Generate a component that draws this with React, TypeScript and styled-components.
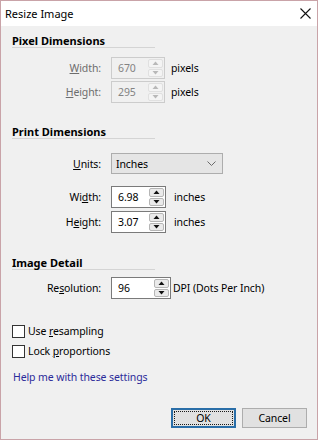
import React from "react";
import styled, { createGlobalStyle } from "styled-components";

const Global = createGlobalStyle`
  html, body { margin: 0; padding: 0; background: #f0f0f0; }
  body {
    font-family: "Noto Sans", "Open Sans", sans-serif;
    font-size: 10.5px;
    letter-spacing: -0.1px;
    color: #000;
  }
  #root { width: 318px; height: 440px; }
`;

const Window = styled.div`
  box-sizing: border-box;
  width: 318px;
  height: 440px;
  border: 1px solid #c9a3a8;
  background: #f0f0f0;
  display: flex;
  flex-direction: column;
`;

const TitleBar = styled.div`
  height: 25px;
  background: #fff;
  display: flex;
  align-items: center;
  justify-content: space-between;
  padding: 0 6px 0 4px;
  font-size: 11px;
  letter-spacing: 0;
`;

const Body = styled.div`
  flex: 1;
  display: flex;
  flex-direction: column;
  padding: 8px 10px 0 11px;
`;

const Heading = styled.div<{ $top: number }>`
  margin-top: ${(p) => p.$top}px;
  width: 143px;
  font-weight: 700;
  font-size: 11px;
  letter-spacing: 0;
  line-height: 13px;
  border-bottom: 1px solid #d4d4d4;
`;

const Row = styled.div<{ $top: number }>`
  display: grid;
  grid-template-columns: 89px auto 1fr;
  column-gap: 10px;
  align-items: center;
  margin-top: ${(p) => p.$top}px;
`;

const Label = styled.span<{ $dim?: boolean }>`
  text-align: right;
  color: ${(p) => (p.$dim ? "#6d6d6d" : "#000")};
`;

const Unit = styled.span<{ $gap: number }>`
  margin-left: ${(p) => p.$gap}px;
`;

const SpinBox = styled.div<{ $w: number; $disabled?: boolean }>`
  box-sizing: border-box;
  width: ${(p) => p.$w}px;
  height: 22px;
  display: flex;
  border: 1px solid ${(p) => (p.$disabled ? "#cccccc" : "#7a7a7a")};
  background: ${(p) => (p.$disabled ? "#f0f0f0" : "#fff")};
`;

const SpinText = styled.div<{ $disabled?: boolean }>`
  flex: 1;
  padding-left: 6px;
  display: flex;
  align-items: center;
  color: ${(p) => (p.$disabled ? "#838383" : "#000")};
`;

const SpinButtons = styled.div`
  width: 15px;
  display: flex;
  flex-direction: column;
  gap: 1px;
  padding: 1px 1px 1px 0;
`;

const SpinButton = styled.div<{ $disabled?: boolean }>`
  flex: 1;
  box-sizing: border-box;
  border: 1px solid ${(p) => (p.$disabled ? "#e0e0e0" : "#b5b5b5")};
  border-radius: 2px;
  background: ${(p) => (p.$disabled ? "#f4f4f4" : "#eaeaea")};
  display: flex;
  align-items: center;
  justify-content: center;
`;

const Combo = styled.div`
  box-sizing: border-box;
  width: 112px;
  height: 21px;
  border: 1px solid #adadad;
  background: #e5e5e5;
  display: flex;
  align-items: center;
  justify-content: space-between;
  padding: 0 6px 0 4px;
`;

const CheckRow = styled.label<{ $top: number }>`
  display: flex;
  align-items: center;
  gap: 3px;
  margin-top: ${(p) => p.$top}px;
  height: 14px;
`;

const Box = styled.span`
  box-sizing: border-box;
  width: 13px;
  height: 13px;
  border: 1px solid #333;
  background: #fff;
`;

const Link = styled.div`
  margin-top: 12px;
  line-height: 15px;
  color: #2b2b9a;
  margin-left: 1px;
`;

const Footer = styled.div`
  margin-top: auto;
  display: flex;
  justify-content: flex-end;
  gap: 6px;
  padding: 0 0 11px 0;
`;

const Button = styled.div<{ $default?: boolean }>`
  box-sizing: border-box;
  width: 65px;
  height: 20px;
  display: flex;
  align-items: center;
  justify-content: center;
  background: #e1e1e1;
  border: 1px solid ${(p) => (p.$default ? "#2a6ea8" : "#adadad")};
  box-shadow: ${(p) => (p.$default ? "inset 0 0 0 1px #2a6ea8" : "none")};
  position: relative;
`;

const Focus = styled.span`
  position: absolute;
  inset: 2px;
  border: 1px dotted #1a1a1a;
`;

const U = styled.span`
  text-decoration: underline;
`;

const Arrow = ({ up, color }: { up?: boolean; color: string }) => (
  <svg width="7" height="4" viewBox="0 0 7 4">
    <polygon points={up ? "0.5,4 3.5,0.5 6.5,4" : "0.5,0 3.5,3.5 6.5,0"} fill={color} />
  </svg>
);

const Spinner = ({ value, w, disabled }: { value: string; w: number; disabled?: boolean }) => (
  <SpinBox $w={w} $disabled={disabled}>
    <SpinText $disabled={disabled}>{value}</SpinText>
    <SpinButtons>
      <SpinButton $disabled={disabled}>
        <Arrow up color={disabled ? "#b8b8b8" : "#111"} />
      </SpinButton>
      <SpinButton $disabled={disabled}>
        <Arrow color={disabled ? "#b8b8b8" : "#111"} />
      </SpinButton>
    </SpinButtons>
  </SpinBox>
);

export default function App() {
  return (
    <>
      <Global />
      <Window>
        <TitleBar>
          <span>Resize Image</span>
          <svg width="11" height="11" viewBox="0 0 11 11">
            <path d="M0.5 0.5 L10.5 10.5 M10.5 0.5 L0.5 10.5" stroke="#111" strokeWidth="1.1" />
          </svg>
        </TitleBar>
        <Body>
          <Heading $top={0}>Pixel Dimensions</Heading>
          <Row $top={9}>
            <Label $dim><U>W</U>idth:</Label>
            <Spinner value="670" w={54} disabled />
            <Unit $gap={-4}>pixels</Unit>
          </Row>
          <Row $top={2}>
            <Label $dim><U>H</U>eight:</Label>
            <Spinner value="295" w={54} disabled />
            <Unit $gap={-4}>pixels</Unit>
          </Row>

          <Heading $top={22}>Print Dimensions</Heading>
          <Row $top={14}>
            <Label><U>U</U>nits:</Label>
            <Combo>
              <span>Inches</span>
              <svg width="9" height="5" viewBox="0 0 9 5">
                <polyline points="0.5,0.5 4.5,4.5 8.5,0.5" fill="none" stroke="#6a6a6a" strokeWidth="1" />
              </svg>
            </Combo>
            <span />
          </Row>
          <Row $top={12}>
            <Label>Wi<U>d</U>th:</Label>
            <Spinner value="6.98" w={55} />
            <Unit $gap={-2}>inches</Unit>
          </Row>
          <Row $top={3}>
            <Label>H<U>e</U>ight:</Label>
            <Spinner value="3.07" w={55} />
            <Unit $gap={-2}>inches</Unit>
          </Row>

          <Heading $top={23}>Image Detail</Heading>
          <Row $top={7}>
            <Label>Re<U>s</U>olution:</Label>
            <Spinner value="96" w={60} />
            <Unit $gap={-8}>DPI (Dots Per Inch)</Unit>
          </Row>

          <CheckRow $top={25}>
            <Box />
            <span>Use <U>r</U>esampling</span>
          </CheckRow>
          <CheckRow $top={6}>
            <Box />
            <span>Lock <U>p</U>roportions</span>
          </CheckRow>

          <Link>Help me with these settings</Link>

          <Footer>
            <Button $default>
              <Focus />
              OK
            </Button>
            <Button>Cancel</Button>
          </Footer>
        </Body>
      </Window>
    </>
  );
}
